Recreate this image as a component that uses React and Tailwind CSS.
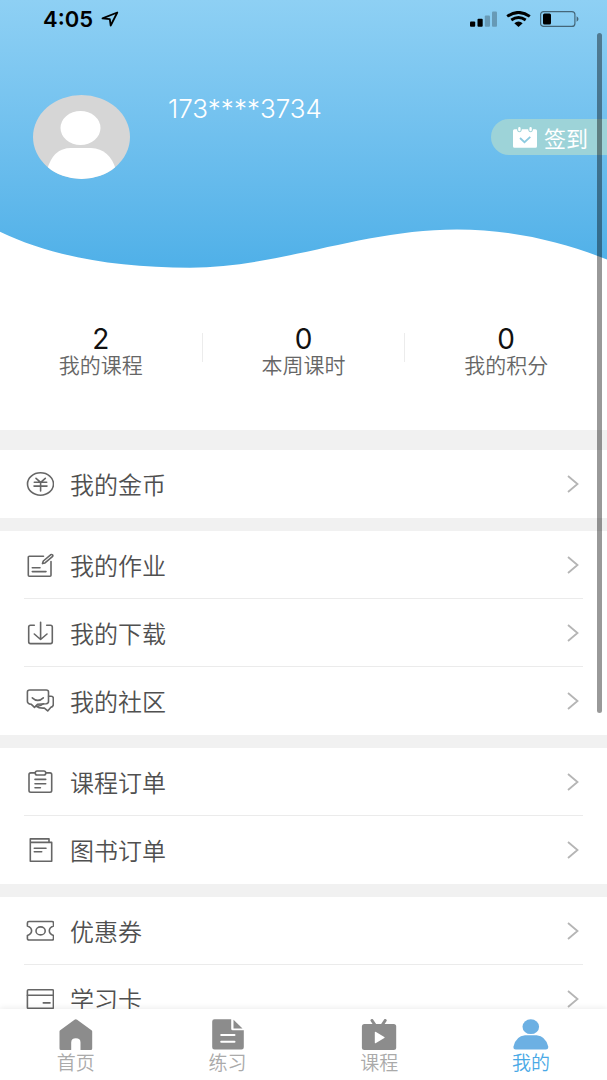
import React from 'react';

const CoinIcon = () => (
  <>
    <ellipse cx="14.5" cy="12" rx="13" ry="11.2" />
    <path d="M10 6.3l4.7 4 4.6-4M8.3 10.3h12.4M8 14.1h13M14.6 10.3V19" />
  </>
);

const HomeworkIcon = () => (
  <>
    <path d="M17.5 3.2H3.3a1 1 0 0 0-1 1v18a1 1 0 0 0 1 1H24a1 1 0 0 0 1-1V8.5" />
    <path d="M16.5 10.6l.8-2.6 7.3-6.2q1.2-.7 2 .2.6.9-.2 1.7L19 9.9z" />
    <path d="M6.3 14.8H14M6.3 18.6H20" />
  </>
);

const DownloadIcon = () => (
  <>
    <path d="M8.3 4.3H4.5q-1.8 0-1.8 1.8v14.7q0 1.8 1.8 1.8h20q1.8 0 1.8-1.8V6.1q0-1.8-1.8-1.8h-3.8" />
    <path d="M14.6 1.3v17.2M8.3 13l6.3 5.5L21 13" />
  </>
);

const CommunityIcon = () => (
  <>
    <path d="M3.8 1h16.4q2.3 0 2.3 2v9.5q0 2-2.3 2.3l-8.700.4-3 3.2-3.400-3.200q-3.700-.4-3.700-3V3Q1.400 1 3.800 1z" />
    <path d="M6.3 8.8q5.5 5.2 11 0" />
    <path d="M22.6 7.2h2.5q2.2 0 2.2 2v6.4q0 2.200-2.600 2.800l-3 3.500-3.300-2.800q-5.500.3-8-1.700 4.500-.1 7-2.600" />
  </>
);

const CourseOrderIcon = () => (
  <>
    <path d="M9.3 2.9H4.8Q3 2.9 3 4.6v16q0 1.7 1.8 1.7H24q1.7 0 1.7-1.7v-16q0-1.7-1.7-1.7h-4.3" />
    <rect x="9.3" y="1" width="10.4" height="4" rx="1.8" />
    <path d="M9 9.4h10.7M9 13.7h10.7M9 17.8h5.4" />
  </>
);

const BookOrderIcon = () => (
  <>
    <path d="M4.3 4.4h21.4v18.8H4.3zM4.3 4.4V.9H23v3.5" />
    <path d="M8.3 10.2H20M8.3 13.8h7.4" />
  </>
);

const CouponIcon = () => (
  <>
    <path d="M3 2.5h23q1.500 0 1.500 1.400v3.200q-4.200 1.400-4.200 4.700t4.200 4.700v3.100q0 1.400-1.500 1.400H3q-1.600 0-1.600-1.400v-3.100q4.200-1.400 4.200-4.700T1.400 7.100V3.900Q1.400 2.500 3 2.500z" />
    <ellipse cx="14.6" cy="11.9" rx="4.6" ry="4" />
  </>
);

const CardIcon = () => (
  <>
    <rect x="1.4" y="2.8" width="26" height="18.6" rx="1" />
    <path d="M1.4 8.2h26M17.3 15.9H24" />
  </>
);

const sections = [
  [{ label: '我的金币', icon: CoinIcon }],
  [
    { label: '我的作业', icon: HomeworkIcon },
    { label: '我的下载', icon: DownloadIcon },
    { label: '我的社区', icon: CommunityIcon },
  ],
  [
    { label: '课程订单', icon: CourseOrderIcon },
    { label: '图书订单', icon: BookOrderIcon },
  ],
  [
    { label: '优惠券', icon: CouponIcon },
    { label: '学习卡', icon: CardIcon },
  ],
];

const stats = [
  { value: 2, label: '我的课程' },
  { value: 0, label: '本周课时' },
  { value: 0, label: '我的积分' },
];

const tabs = [
  {
    label: '首页',
    icon: (
      <path d="M16 .7q1.300-1 2.600 0L33 11.200q.7.500.7 1.400V29.500q0 1.500-1.500 1.500H22v-7.500q0-4.200-4.600-4.200t-4.700 4.200V31H2.500Q1 31 1 29.500V12.600q0-.9.7-1.400z" />
    ),
  },
  {
    label: '练习',
    icon: (
      <>
        <path d="M4 .3h16.700v9.500q0 1.500 1.500 1.500h11.100v16.900q0 2.300-2.300 2.300H4q-2.300 0-2.300-2.300V2.600Q1.700.3 4 .3z" />
        <path d="M23 .8l9 8.700h-9z" />
        <path d="M10.700 15.900H24M10.700 22.700H24" fill="none" stroke="#fff" strokeWidth="2" strokeLinecap="round" />
      </>
    ),
  },
  {
    label: '课程',
    icon: (
      <>
        <path d="M10.500 1.500l3 4.500M23.700 1.500l-3 4.500" stroke="currentColor" strokeWidth="3" strokeLinecap="round" />
        <rect x=".4" y="5" width="34.300" height="26" rx="2.500" />
        <path d="M13.300 13.500q0-1.300 1.200-.6l8.300 5q.9.600 0 1.200l-8.300 5q-1.200.700-1.200-.6z" fill="#fff" />
      </>
    ),
  },
  {
    label: '我的',
    active: true,
    icon: (
      <>
        <ellipse cx="17.300" cy="7.700" rx="8.300" ry="7.400" />
        <path d="M11.500 16.300h11.600Q32 17 34.700 27.500q.4 3-2.500 3H2.400q-2.900 0-2.400-3Q2.500 17 11.500 16.300z" />
      </>
    ),
  },
];

const StatusBar = () => (
  <div className="flex h-[38px] items-center justify-between pl-[43px] pr-7 text-black">
    <div className="flex items-center gap-2">
      <span className="font-[Inter,sans-serif] text-[22px] leading-[22px] font-semibold">4:05</span>
      <svg className="h-4 w-[18px]" viewBox="0 0 18 16" fill="none" stroke="currentColor" strokeWidth="1.8" strokeLinejoin="round">
        <path d="M16.300 1.500L1.500 7.300l7.300.9.900 6.300z" />
      </svg>
    </div>
    <div className="flex items-center gap-[9px]">
      <svg className="h-4 w-[27px]" viewBox="0 0 27 16" fill="currentColor">
        <rect x="0" y="10.500" width="5.200" height="5.200" rx="1" />
        <rect x="7.500" y="7.800" width="5.200" height="7.900" rx="1" />
        <rect x="14.800" y="4.400" width="5.200" height="11.300" rx="1" opacity=".25" />
        <rect x="22" y=".6" width="5" height="15.100" rx="1" opacity=".25" />
      </svg>
      <svg className="h-4 w-[25px]" viewBox="0 0 25 16" fill="none" stroke="currentColor" strokeWidth="2.9">
        <path d="M1.200 5.400Q12.500-2.600 23.800 5.400M5.300 9q7.200-5 14.400 0" />
        <path d="M8.300 12.200q4.200-3.200 8.400 0L12.500 16z" fill="currentColor" stroke="none" />
      </svg>
      <svg className="h-4 w-[39px]" viewBox="0 0 39 16" fill="none">
        <rect x=".6" y=".6" width="34.300" height="14.800" rx="3" stroke="currentColor" strokeWidth="1.2" opacity=".5" />
        <rect x="3" y="2.500" width="8" height="11" rx="1.500" fill="currentColor" />
        <path d="M36.600 5.300q1.900.9 1.900 2.700t-1.900 2.700z" fill="currentColor" opacity=".5" />
      </svg>
    </div>
  </div>
);

const Header = () => (
  <header className="bg-linear-to-b from-[#8ed0f4] to-[#4fb0e8]">
    <StatusBar />
    <div className="mt-[57px] flex items-center pl-[33px]">
      <svg className="h-[84px] w-[97px] shrink-0" viewBox="0 0 97 84">
        <defs>
          <clipPath id="avatar">
            <ellipse cx="48.500" cy="42" rx="48.500" ry="42" />
          </clipPath>
        </defs>
        <g clipPath="url(#avatar)">
          <rect width="97" height="84" fill="#d6d6d6" />
          <ellipse cx="47.500" cy="33" rx="20" ry="17" fill="#fff" />
          <path d="M14 75Q20 53 38 53h20q19 1 25 22v9H14z" fill="#fff" />
        </g>
      </svg>
      <p className="ml-[38px] flex-1 self-start font-[Inter,sans-serif] text-[26px] leading-[28px] font-light text-white">
        173****3734
      </p>
      <button className="flex h-9 w-[116px] items-center gap-[7px] rounded-l-full bg-[#9dd3d8] pl-[22px] text-white">
        <svg className="h-[21px] w-6" viewBox="0 0 24 21">
          <path d="M1.500 2.300H4q.3 3 2.400 3t2.500-3h6.200q.4 3 2.500 3t2.400-3h2.500q1.500 0 1.500 1.500v15.500q0 1.500-1.500 1.500h-21Q0 20.800 0 19.300V3.800q0-1.500 1.500-1.500z" fill="currentColor" />
          <path d="M6.400 1.300V3M17.600 1.300V3" stroke="currentColor" strokeWidth="2.4" strokeLinecap="round" />
          <path d="M7 11l4.500 4.200L17.300 9.800" fill="none" stroke="#8dcbe0" strokeWidth="1.8" />
        </svg>
        <span className="text-[22px] leading-6">签到</span>
      </button>
    </div>
    <svg className="mt-[49px] block h-10 w-full" viewBox="0 0 607 40" preserveAspectRatio="none">
      <path d="M0 3.700C50 28 115 39.700 190 39.700C280 39.700 360 1.500 457 1.500C515 1.500 565 15 607 31.500V41H0z" fill="#fff" />
    </svg>
  </header>
);

const Stats = () => (
  <section className="flex pt-[57px] pb-[55px]">
    {stats.map((item, i) => (
      <React.Fragment key={item.label}>
        {i > 0 && <div className="mt-2 h-[29px] w-px bg-[#ececec]" />}
        <div className="flex-1 text-center">
          <p className="font-[Inter,sans-serif] text-[28px] leading-[28px] text-[#111]">{item.value}</p>
          <p className="text-[21px] leading-[22px] font-[350] text-[#666]">{item.label}</p>
        </div>
      </React.Fragment>
    ))}
  </section>
);

const MenuItem = ({ label, icon: Icon }) => (
  <a href="#" className="flex h-[68px] items-center pl-0.5 pr-1">
    <svg
      className="h-6 w-7"
      viewBox="0 0 28 24"
      fill="none"
      stroke="#666"
      strokeWidth="1.6"
      strokeLinecap="round"
      strokeLinejoin="round"
    >
      <Icon />
    </svg>
    <span className="ml-4 flex-1 text-2xl leading-7 font-[350] text-[#505050]">{label}</span>
    <svg className="h-[18px] w-3" viewBox="0 0 12 18" fill="none" stroke="#b5b5b5" strokeWidth="1.8">
      <path d="M1 1l9.500 8L1 17" />
    </svg>
  </a>
);

const TabBar = () => (
  <nav className="grid shrink-0 grid-cols-4 bg-white pt-2.5 pb-[7px] shadow-[0_-1px_6px_rgba(0,0,0,0.08)]">
    {tabs.map((tab) => (
      <a
        key={tab.label}
        href="#"
        className={`flex flex-col items-center ${tab.active ? 'text-[#6cb0e3]' : 'text-[#8c8c8c]'}`}
      >
        <svg className="h-8 w-9" viewBox="0 0 35 32" fill="currentColor">
          {tab.icon}
        </svg>
        <span className={`text-[19px] leading-[22px] font-[350] ${tab.active ? 'text-[#4aa9e6]' : 'text-[#aaa]'}`}>
          {tab.label}
        </span>
      </a>
    ))}
  </nav>
);

const App = () => {
  return (
    <div className="relative flex h-screen flex-col overflow-hidden bg-white font-['Noto_Sans_CJK_SC',sans-serif]">
      <main className="flex-1 overflow-y-auto [scrollbar-width:none]">
        <Header />
        <Stats />
        <div className="h-5 bg-[#f1f1f1]" />

        {/* Menu groups */}
        <div className="flex flex-col gap-[13px] bg-[#f1f1f1]">
          {sections.map((items) => (
            <div key={items[0].label} className="divide-y divide-[#ebebeb] bg-white px-6">
              {items.map((item) => (
                <MenuItem key={item.label} {...item} />
              ))}
            </div>
          ))}
        </div>
      </main>

      <TabBar />

      {/* Scroll indicator */}
      <div className="absolute top-[33px] right-[5px] h-[680px] w-[5px] rounded-full bg-black/40" />
    </div>
  );
};

export default App;
